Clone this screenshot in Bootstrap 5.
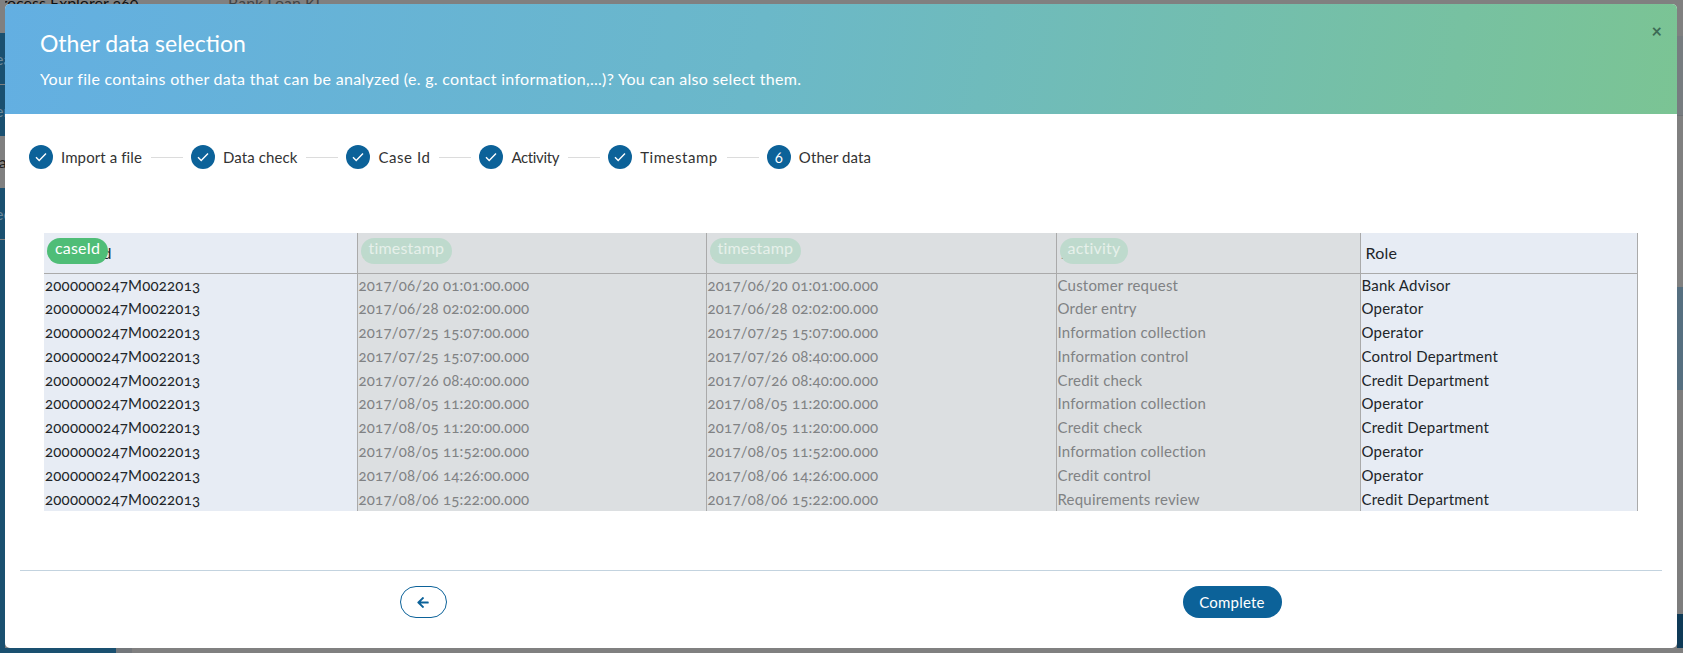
<!DOCTYPE html>
<html><head><meta charset="utf-8">
<link href="https://cdn.jsdelivr.net/npm/bootstrap@5.3.0/dist/css/bootstrap.min.css" rel="stylesheet">
<style>
html,body{height:653px;overflow:hidden}
body{background:#808080;font-family:Lato,"Liberation Sans",sans-serif;font-variant-numeric:oldstyle-nums;color:#212529}
.stage{height:653px}
.side-l{width:5px;flex:none;overflow:hidden;background:#1a5070}
.side-r{width:6px;flex:none;overflow:hidden;background:#808080}
.mid{min-width:0;flex:1 1 auto}
.band{overflow:hidden;white-space:nowrap;font-size:16px;line-height:1;display:flex;align-items:center}
.bg-g{background:#808080}
.bg-n{background:#1a5070}
.bl-33{height:33px}.bl-51{height:51px}.bl-52{height:52px}.bl-1{height:1px}
.lt-f{color:#6f8a9c;margin-left:-5px}
.lt-k{color:#1c1c1c;margin-left:-5px}
.bd-1{height:36px}.bd-2{height:79px;background:#777c80}.bd-3{height:172px;background:#808080;border-top:1px solid #6f7377}
.bd-4{height:103px;background:#566f80}.bd-5{height:224px;background:#7d7d7d}
.bd-6{height:34px;background:#0e3a57}.bd-7{height:5px}
.top-strip{height:4px;overflow:hidden;font-size:16px;line-height:5px;white-space:nowrap;color:#111}
.top-strip span{display:inline-block}
.t-a{margin-left:-13px;width:236px}
.t-b{color:#444}
.bot-strip{height:5px}
.bs-a{width:111px;background:#1a5070}.bs-b{width:16px;background:#73777b}
.dlg{height:644px;background:#fff;border-radius:5px;overflow:hidden;position:relative}
.dlg-head{height:110px;flex:none;padding:24px 35px 0;color:#fff;background:linear-gradient(100deg,#63afe2 0%,#6bb8c9 45%,#7bc494 100%)}
.dlg-head h5{font-size:23px;font-weight:400;margin:0 0 10px;line-height:30px}
.dlg-head p{font-size:16px;margin:0;line-height:22px;letter-spacing:.3px}
.x-btn{position:absolute;top:18px;right:15px;font-size:18px;font-weight:700;line-height:1;color:#3d6a55;background:none;border:0;padding:0}
.steps{padding:31px 24px 0;height:119px;flex:none;font-size:15px;letter-spacing:.1px;color:#333}
.dot{width:24px;height:24px;border-radius:50%;background:#0c6299;color:#fff;font-size:15px;letter-spacing:0}
.rule{width:32px;height:1px;background:#dcdcdc;margin:0 8px 0 9px}
.sp-wide{letter-spacing:.55px}
.sp-tight{letter-spacing:-.35px}
.tb-wrap{margin:0 39px;font-size:15px;letter-spacing:.2px}
.grid-tb{width:100%;table-layout:fixed;border-collapse:collapse}
.grid-tb th{height:40px;font-weight:400;font-size:16px;padding:0 5px;border-bottom:1px solid #aaa;position:relative}
.grid-tb td{height:23.8px;padding:0 1px;line-height:23.8px;white-space:nowrap}
.grid-tb th,.grid-tb td{border-left:1px solid #aaa}
.grid-tb tr>*:first-child{border-left:0}
.grid-tb tr>*:last-child{border-right:1px solid #aaa}
.grid-tb th:first-child{padding-left:54px}
.c-on{background:#e7ecf4;color:#212529}
.c-off{background:#dcdfe1;color:#808284}
.tagp{position:absolute;left:3px;top:5px;height:26px;border-radius:13px;padding:0 8px;background:#4fbd77;color:#fff;font-weight:400;font-size:16px;line-height:20px;letter-spacing:.2px}
.tagp.dim{background:#bedacd;color:#e6f0ea}
.foot-rule{margin:0 15px;border-top:1px solid #c3d3df;opacity:1}
.foot{height:77px;flex:none;position:relative}
.b-pill{border-radius:16px;height:32px;font-size:15px;line-height:1;padding:0;letter-spacing:.2px}
.b-back{width:47px;border:1px solid #0c6299;background:#fff;color:#0c6299}
.b-done{width:99px;background:#0c6299;color:#fff;border:0}
.foot .col-6{padding-top:15px}
.foot .cdone{padding-right:54px}
</style></head><body>
<div class="stage d-flex">
 <div class="side-l d-flex flex-column">
  <div class="band bg-g bl-33"></div>
  <div class="band bg-n bl-51"><span class="lt-f">ea</span></div>
  <div class="band bg-g bl-1"></div>
  <div class="band bg-n bl-51"><span class="lt-f">er</span></div>
  <div class="band bg-g bl-52"><span class="lt-k">ia</span></div>
  <div class="band bg-n bl-51"><span class="lt-f">ee</span></div>
  <div class="band bg-g bl-1"></div>
 </div>
 <div class="mid d-flex flex-column">
  <div class="top-strip"><span class="t-a">Process Explorer 360</span><span class="t-b">Bank Loan KI</span></div>
  <div class="dlg d-flex flex-column">
   <div class="dlg-head">
    <h5>Other data selection</h5>
    <p>Your file contains other data that can be analyzed (e. g. contact information,...)? You can also select them.</p>
    <button class="x-btn" type="button">×</button>
   </div>
   <div class="steps d-flex align-items-start">
    <div class="d-flex align-items-center"><span class="dot d-flex align-items-center justify-content-center"><svg width="12" height="10" viewBox="0 0 12 10"><path d="M1 5.2l3.2 3.2L11 1.5" fill="none" stroke="#fff" stroke-width="1.4"/></svg></span><span class="ms-2">Import a file</span><span class="rule"></span></div>
    <div class="d-flex align-items-center"><span class="dot d-flex align-items-center justify-content-center"><svg width="12" height="10" viewBox="0 0 12 10"><path d="M1 5.2l3.2 3.2L11 1.5" fill="none" stroke="#fff" stroke-width="1.4"/></svg></span><span class="ms-2">Data check</span><span class="rule"></span></div>
    <div class="d-flex align-items-center"><span class="dot d-flex align-items-center justify-content-center"><svg width="12" height="10" viewBox="0 0 12 10"><path d="M1 5.2l3.2 3.2L11 1.5" fill="none" stroke="#fff" stroke-width="1.4"/></svg></span><span class="ms-2 sp-wide">Case Id</span><span class="rule"></span></div>
    <div class="d-flex align-items-center"><span class="dot d-flex align-items-center justify-content-center"><svg width="12" height="10" viewBox="0 0 12 10"><path d="M1 5.2l3.2 3.2L11 1.5" fill="none" stroke="#fff" stroke-width="1.4"/></svg></span><span class="ms-2 sp-tight">Activity</span><span class="rule"></span></div>
    <div class="d-flex align-items-center"><span class="dot d-flex align-items-center justify-content-center"><svg width="12" height="10" viewBox="0 0 12 10"><path d="M1 5.2l3.2 3.2L11 1.5" fill="none" stroke="#fff" stroke-width="1.4"/></svg></span><span class="ms-2 sp-wide">Timestamp</span><span class="rule"></span></div>
    <div class="d-flex align-items-center"><span class="dot d-flex align-items-center justify-content-center">6</span><span class="ms-2">Other data</span></div>
   </div>
   <div class="tb-wrap flex-grow-1">
    <table class="grid-tb">
     <colgroup><col style="width:313px"><col style="width:349px"><col style="width:350px"><col style="width:304px"><col></colgroup>
     <thead><tr><th class="c-on">Id<span class="tagp">caseId</span></th><th class="c-off">Start<span class="tagp dim">timestamp</span></th><th class="c-off">End<span class="tagp dim">timestamp</span></th><th class="c-off">Activity<span class="tagp dim">activity</span></th><th class="c-on">Role</th></tr></thead>
     <tbody>
     <tr><td class="c-on">2000000247M0022013</td><td class="c-off">2017/06/20 01:01:00.000</td><td class="c-off">2017/06/20 01:01:00.000</td><td class="c-off">Customer request</td><td class="c-on">Bank Advisor</td></tr>
     <tr><td class="c-on">2000000247M0022013</td><td class="c-off">2017/06/28 02:02:00.000</td><td class="c-off">2017/06/28 02:02:00.000</td><td class="c-off">Order entry</td><td class="c-on">Operator</td></tr>
     <tr><td class="c-on">2000000247M0022013</td><td class="c-off">2017/07/25 15:07:00.000</td><td class="c-off">2017/07/25 15:07:00.000</td><td class="c-off">Information collection</td><td class="c-on">Operator</td></tr>
     <tr><td class="c-on">2000000247M0022013</td><td class="c-off">2017/07/25 15:07:00.000</td><td class="c-off">2017/07/26 08:40:00.000</td><td class="c-off">Information control</td><td class="c-on">Control Department</td></tr>
     <tr><td class="c-on">2000000247M0022013</td><td class="c-off">2017/07/26 08:40:00.000</td><td class="c-off">2017/07/26 08:40:00.000</td><td class="c-off">Credit check</td><td class="c-on">Credit Department</td></tr>
     <tr><td class="c-on">2000000247M0022013</td><td class="c-off">2017/08/05 11:20:00.000</td><td class="c-off">2017/08/05 11:20:00.000</td><td class="c-off">Information collection</td><td class="c-on">Operator</td></tr>
     <tr><td class="c-on">2000000247M0022013</td><td class="c-off">2017/08/05 11:20:00.000</td><td class="c-off">2017/08/05 11:20:00.000</td><td class="c-off">Credit check</td><td class="c-on">Credit Department</td></tr>
     <tr><td class="c-on">2000000247M0022013</td><td class="c-off">2017/08/05 11:52:00.000</td><td class="c-off">2017/08/05 11:52:00.000</td><td class="c-off">Information collection</td><td class="c-on">Operator</td></tr>
     <tr><td class="c-on">2000000247M0022013</td><td class="c-off">2017/08/06 14:26:00.000</td><td class="c-off">2017/08/06 14:26:00.000</td><td class="c-off">Credit control</td><td class="c-on">Operator</td></tr>
     <tr><td class="c-on">2000000247M0022013</td><td class="c-off">2017/08/06 15:22:00.000</td><td class="c-off">2017/08/06 15:22:00.000</td><td class="c-off">Requirements review</td><td class="c-on">Credit Department</td></tr>
     </tbody>
    </table>
   </div>
   <hr class="foot-rule">
   <div class="foot row g-0">
    <div class="col-6 text-center"><button class="btn b-pill b-back" type="button" aria-label="Back"><svg width="12" height="13" viewBox="0 0 448 512" class="d-block mx-auto"><path fill="#0c6299" d="M257.5 445.1l-22.2 22.2c-9.4 9.4-24.6 9.4-33.9 0L7 273c-9.4-9.4-9.4-24.6 0-33.9L201.4 44.7c9.4-9.4 24.6-9.4 33.9 0l22.2 22.2c9.5 9.5 9.3 25-.4 34.3L136.6 216H424c13.3 0 24 10.7 24 24v32c0 13.3-10.7 24-24 24H136.6l120.5 114.8c9.8 9.3 10 24.8.4 34.3z"/></svg></button></div>
    <div class="col-6 text-center cdone"><button class="btn b-pill b-done" type="button">Complete</button></div>
   </div>
  </div>
  <div class="bot-strip d-flex"><div class="bs-a"></div><div class="bs-b"></div></div>
 </div>
 <div class="side-r d-flex flex-column">
  <div class="bd-1"></div><div class="bd-2"></div><div class="bd-3"></div><div class="bd-4"></div><div class="bd-5"></div><div class="bd-6"></div><div class="bd-7"></div>
 </div>
</div>
</body></html>
